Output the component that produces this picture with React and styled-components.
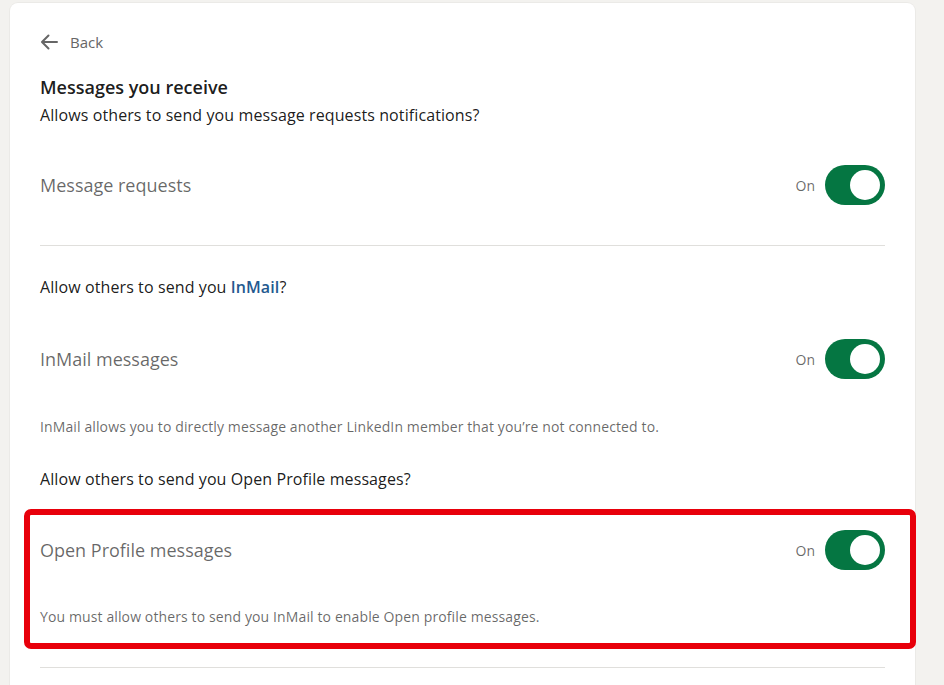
import styled, { createGlobalStyle } from "styled-components"

const GlobalStyle = createGlobalStyle`
  html, body {
    margin: 0;
    padding: 0;
    background: #f3f2ef;
    font-family: "Open Sans", "Noto Sans", sans-serif;
    -webkit-font-smoothing: antialiased;
  }
`

const Toggle = ({ on = true }) => (
  <ToggleWrap>
    <OnLabel>{on ? "On" : "Off"}</OnLabel>
    <Track $on={on}>
      <Knob />
    </Track>
  </ToggleWrap>
)

const SettingRow = ({ label, on, top }) => (
  <Row $top={top}>
    <RowLabel>{label}</RowLabel>
    <Toggle on={on} />
  </Row>
)

const App = () => {
  return (
    <Page>
      <GlobalStyle />
      <Card>
        <BackRow>
          <svg width="18" height="16" viewBox="0 0 18 16" fill="none">
            <path d="M17 8H2.5M8.5 1.5L2 8l6.5 6.5" stroke="#666" strokeWidth="2" strokeLinecap="round" strokeLinejoin="round" />
          </svg>
          <BackText>Back</BackText>
        </BackRow>

        <Title>Messages you receive</Title>
        <Question>Allows others to send you message requests notifications?</Question>

        <SettingRow label="Message requests" on top={36} />
        <Divider $top={40} />

        <Question $top={27}>Allow others to send you <InMailLink>InMail</InMailLink>?</Question>
        <SettingRow label="InMail messages" on top={38} />
        <Hint $top={38}>InMail allows you to directly message another LinkedIn member that you’re not connected to.</Hint>

        <Question $top={28}>Allow others to send you Open Profile messages?</Question>

        <Highlight>
          <SettingRow label="Open Profile messages" on top={0} />
          <Hint $top={37}>You must allow others to send you InMail to enable Open profile messages.</Hint>
        </Highlight>

        <Divider $top={18} />
      </Card>
    </Page>
  )
}

const Page = styled.div`
  min-height: 685px;
  padding: 3px 0 0 10px;
  box-sizing: border-box;
`

const Card = styled.div`
  width: 905px;
  box-sizing: border-box;
  background: #ffffff;
  border-radius: 8px;
  padding: 27px 30px 40px;
  box-shadow: 0 0 0 1px rgba(0, 0, 0, 0.03);
`

const BackRow = styled.div`
  display: flex;
  align-items: center;
  gap: 12px;
  height: 24px;
  color: #666666;
`

const BackText = styled.span`
  font-size: 15px;
  font-weight: 400;
  color: #666666;
`

const Title = styled.h2`
  margin: 19px 0 0;
  font-size: 18px;
  line-height: 28px;
  font-weight: 600;
  color: rgba(0, 0, 0, 0.9);
`

const Question = styled.p`
  margin: ${p => p.$top || 0}px 0 0;
  font-size: 16px;
  line-height: 28px;
  letter-spacing: 0.1px;
  color: rgba(0, 0, 0, 0.9);
`

const InMailLink = styled.span`
  color: #24598f;
  font-weight: 600;
`

const Row = styled.div`
  display: flex;
  align-items: center;
  justify-content: space-between;
  height: 40px;
  margin-top: ${p => p.$top}px;
`

const RowLabel = styled.span`
  font-size: 18px;
  color: rgba(0, 0, 0, 0.6);
`

const ToggleWrap = styled.div`
  display: flex;
  align-items: center;
  gap: 10px;
`

const OnLabel = styled.span`
  font-size: 14px;
  color: rgba(0, 0, 0, 0.6);
`

const Track = styled.div`
  width: 60px;
  height: 40px;
  border-radius: 20px;
  background: ${p => (p.$on ? "#057642" : "#8c8c8c")};
  display: flex;
  align-items: center;
  justify-content: ${p => (p.$on ? "flex-end" : "flex-start")};
  padding: 0 5px;
  box-sizing: border-box;
`

const Knob = styled.div`
  width: 30px;
  height: 30px;
  border-radius: 50%;
  background: #ffffff;
`

const Hint = styled.p`
  margin: ${p => p.$top}px 0 0;
  font-size: 14px;
  line-height: 20px;
  letter-spacing: 0.12px;
  color: rgba(0, 0, 0, 0.6);
`

const Divider = styled.hr`
  margin: ${p => p.$top}px 0 0;
  border: none;
  border-top: 1px solid #e0dfdc;
`

const Highlight = styled.div`
  margin: 16px -31px 0 -16px;
  padding: 15px 25px 16px 10px;
  border: 6px solid #e8000b;
  border-radius: 7px;
`

export default App
